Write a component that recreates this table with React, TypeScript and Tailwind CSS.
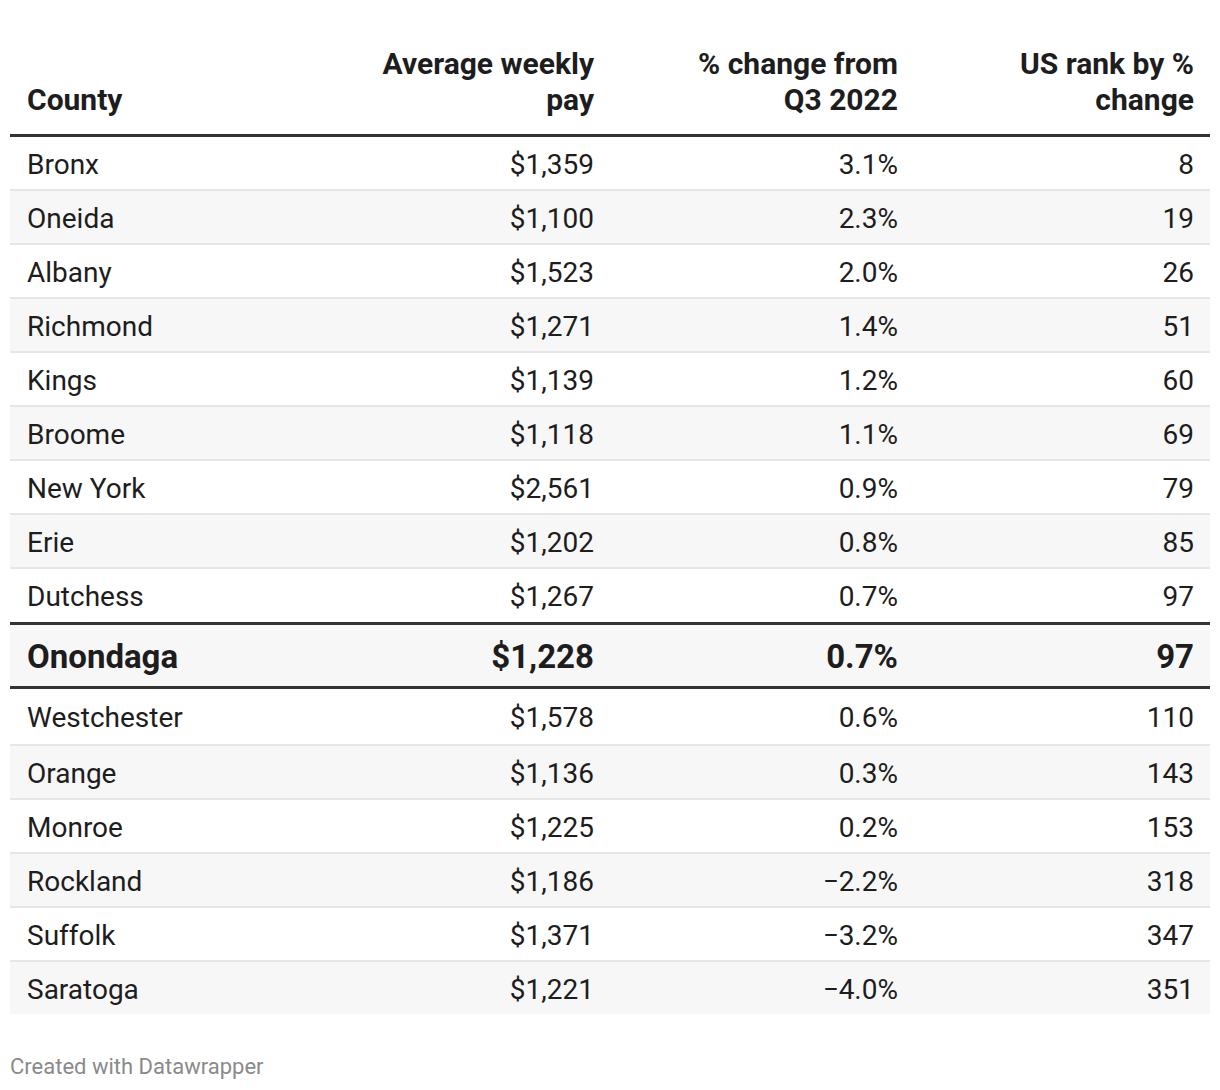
const rows = [
  ["Bronx", "$1,359", "3.1%", "8"],
  ["Oneida", "$1,100", "2.3%", "19"],
  ["Albany", "$1,523", "2.0%", "26"],
  ["Richmond", "$1,271", "1.4%", "51"],
  ["Kings", "$1,139", "1.2%", "60"],
  ["Broome", "$1,118", "1.1%", "69"],
  ["New York", "$2,561", "0.9%", "79"],
  ["Erie", "$1,202", "0.8%", "85"],
  ["Dutchess", "$1,267", "0.7%", "97"],
];

const after = [
  ["Westchester", "$1,578", "0.6%", "110"],
  ["Orange", "$1,136", "0.3%", "143"],
  ["Monroe", "$1,225", "0.2%", "153"],
  ["Rockland", "$1,186", "\u22122.2%", "318"],
  ["Suffolk", "$1,371", "\u22123.2%", "347"],
  ["Saratoga", "$1,221", "\u22124.0%", "351"],
];

function Row({ r, shaded, height }: { r: string[]; shaded: boolean; height: string }) {
  return (
    <div
      className={`grid grid-cols-[300px_300px_304px_296px] items-center pt-[3px] text-[28px] leading-none text-[#1d1d1d] ${
        shaded ? "bg-[#f7f7f7]" : "bg-white"
      } ${height}`}
    >
      <div className="pl-[17px]">{r[0]}</div>
      <div className="pr-[16px] text-right">{r[1]}</div>
      <div className="pr-[16px] text-right">{r[2]}</div>
      <div className="pr-[16px] text-right">{r[3]}</div>
    </div>
  );
}

export default function App() {
  return (
    <div className="min-h-[1090px] bg-white px-[10px] pt-[46px] font-['Roboto',sans-serif]">
      <div className="w-[1200px]">
        <div className="grid grid-cols-[300px_300px_304px_296px] items-end border-b-[3px] border-[#333] pb-[16px] text-[30px] font-bold leading-[36px] text-[#1d1d1d]">
          <div className="pl-[17px]">County</div>
          <div className="pr-[16px] text-right">
            Average weekly
            <br />
            pay
          </div>
          <div className="pr-[16px] text-right">
            % change from
            <br />
            Q3 2022
          </div>
          <div className="pr-[16px] text-right">
            US rank by %
            <br />
            change
          </div>
        </div>

        {rows.map((r, i) => (
          <Row
            key={r[0]}
            r={r}
            shaded={i % 2 === 1}
            height={i === rows.length - 1 ? "h-[52px]" : "h-[54px] border-b-2 border-[#e6e6e6]"}
          />
        ))}

        <div className="mt-px grid h-[67px] grid-cols-[300px_300px_304px_296px] items-center border-y-[3px] border-[#333] bg-[#f7f7f7] pt-[2px] text-[33px] font-bold leading-none text-[#1d1d1d]">
          <div className="pl-[17px]">Onondaga</div>
          <div className="pr-[16px] text-right">$1,228</div>
          <div className="pr-[16px] text-right">0.7%</div>
          <div className="pr-[16px] text-right">97</div>
        </div>

        {after.map((r, i) => (
          <Row
            key={r[0]}
            r={r}
            shaded={i % 2 === 1}
            height={
              i === 0
                ? "h-[57px] border-b-2 border-[#e6e6e6]"
                : i === after.length - 1
                  ? "h-[52px]"
                  : "h-[54px] border-b-2 border-[#e6e6e6]"
            }
          />
        ))}

        <p className="mt-[40px] text-[22px] leading-[26px] text-[#8a8a8a]">Created with Datawrapper</p>
      </div>
    </div>
  );
}
